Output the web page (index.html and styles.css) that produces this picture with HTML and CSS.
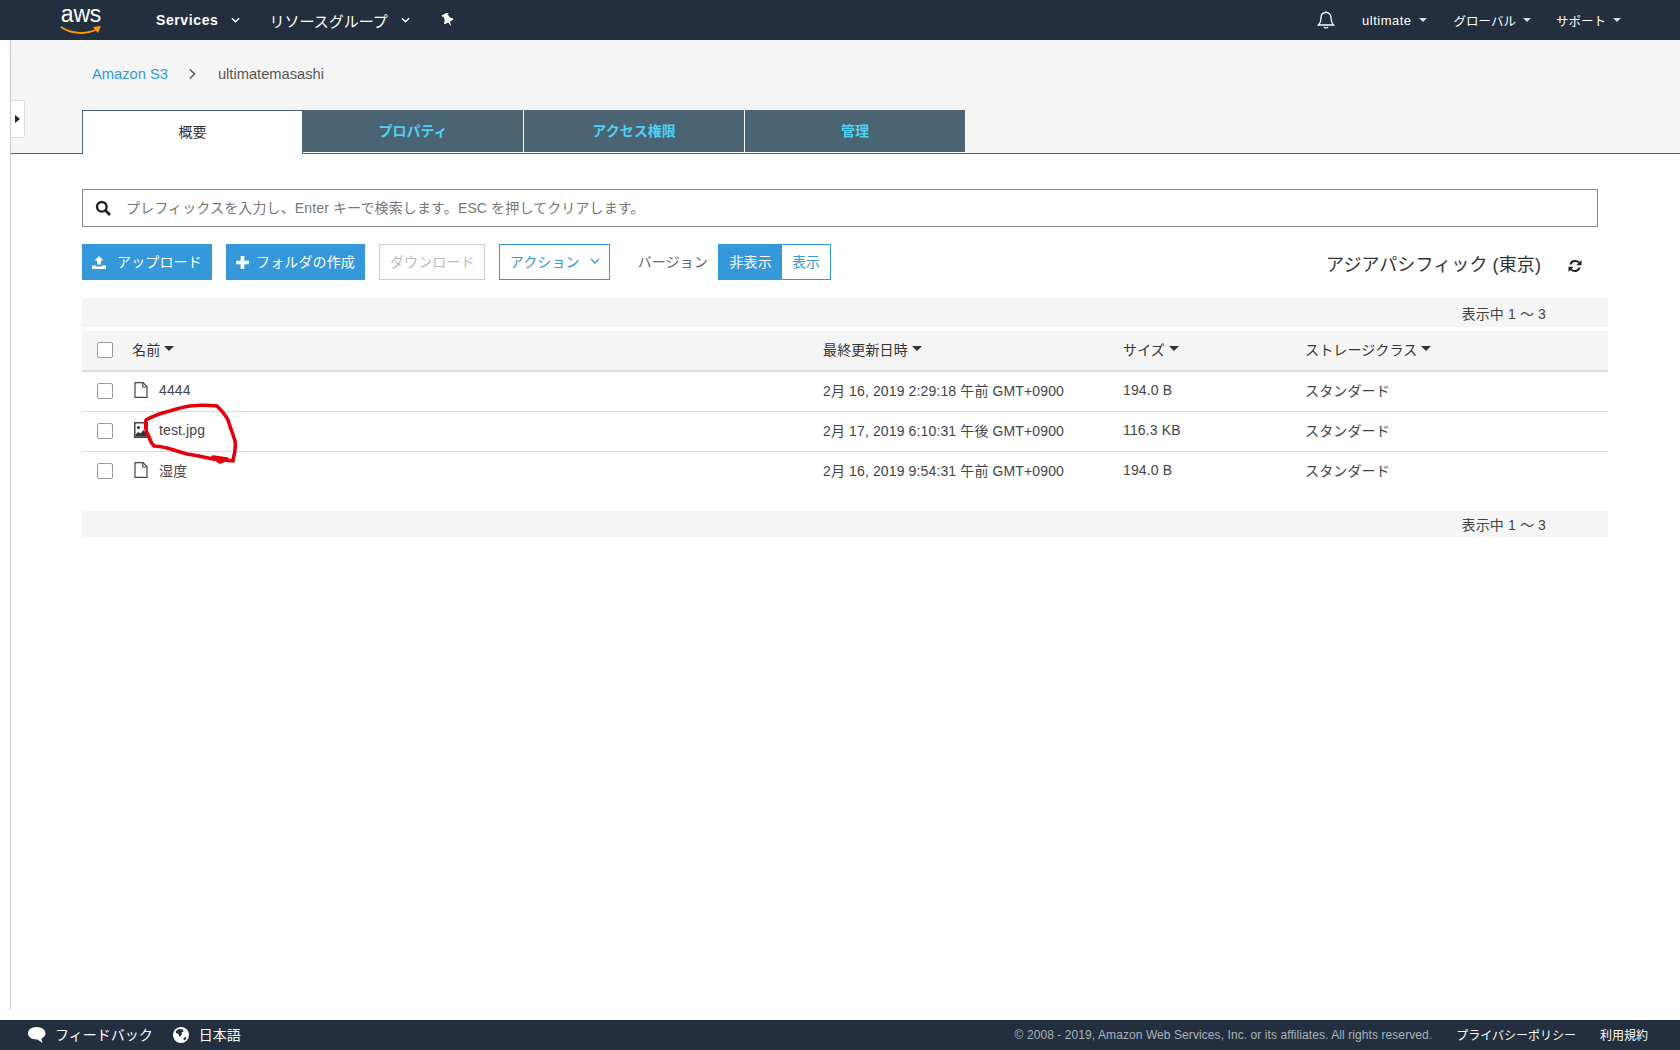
FILE: index.html
```html
<!DOCTYPE html>
<html lang="ja">
<head>
<meta charset="utf-8">
<title>Amazon S3</title>
<link rel="stylesheet" href="styles.css">
</head>
<body>
<div class="page">
  <nav class="nav">
    <div class="logo"><span class="logo-text">aws</span>
      <svg class="logo-smile" viewBox="0 0 42 10"><path d="M1 2C11 9 27 10 37 4" fill="none" stroke="#f90" stroke-width="2"/><path d="M33 2L41 1L38 8Z" fill="#f90"/></svg>
    </div>
    <a class="nav-main services">Services<svg class="chev" viewBox="0 0 10 6"><path d="M1 1l4 4 4-4" fill="none" stroke="#fff" stroke-width="1.6"/></svg></a>
    <a class="nav-main groups">リソースグループ<svg class="chev" viewBox="0 0 10 6"><path d="M1 1l4 4 4-4" fill="none" stroke="#fff" stroke-width="1.6"/></svg></a>
    <svg class="pin" viewBox="0 0 14 14"><g transform="rotate(-28 7 7)"><path d="M3.500 0h7v1.800H9.300l.7 4.200 2 1.800v1.400H8l-1 4.800-1-4.800H2V7.800L4 6l.7-4.200H3.500z" fill="#fff"/></g></svg>
    <div class="nav-right">
      <svg class="bell" viewBox="0 0 18 20"><path d="M9 2.500c-3.500 0-5 2.500-5 5.500 0 3.500-1 5.500-2.500 7h15C15 13.500 14 11.500 14 8c0-3-1.500-5.500-5-5.500zM9 1v1.500M7 17c.5 1.300 3.500 1.300 4 0" fill="none" stroke="#fff" stroke-width="1.300"/></svg>
      <a class="nav-item user">ultimate<i class="caret-w"></i></a>
      <a class="nav-item">グローバル<i class="caret-w"></i></a>
      <a class="nav-item">サポート<i class="caret-w"></i></a>
    </div>
  </nav>

  <main class="main">
    <header class="head">
      <div class="crumbs"><a class="crumb-link">Amazon S3</a>
        <svg class="crumb-sep" viewBox="0 0 8 12"><path d="M2 1.500L6.500 6 2 10.500" fill="none" stroke="#555" stroke-width="1.500"/></svg>
        <span>ultimatemasashi</span></div>
      <div class="tabs">
        <div class="tab active">概要</div>
        <div class="tab">プロパティ</div>
        <div class="tab">アクセス権限</div>
        <div class="tab">管理</div>
      </div>
      <div class="handle"><i class="caret-right"></i></div>
    </header>

    <section class="content">
      <div class="search">
        <svg class="search-icon" viewBox="0 0 16 16"><circle cx="6.800" cy="6.800" r="4.800" fill="none" stroke="#222" stroke-width="2.400"/><path d="M10.300 10.300L15 15" stroke="#222" stroke-width="2.800"/></svg>
        <span>プレフィックスを入力し、Enter キーで検索します。ESC を押してクリアします。</span>
      </div>

      <div class="toolbar">
        <button class="btn primary upload"><svg class="btn-icon" viewBox="0 0 14 14"><path d="M7 1l4.500 4.500H9V9.500H5V5.500H2.500zM0 10.500h4v1h6v-1h4V14H0z" fill="#fff"/></svg>アップロード</button>
        <button class="btn primary folder"><svg class="btn-icon plus" viewBox="0 0 14 14"><path d="M5 0h4v5h5v4H9v5H5V9H0V5h5z" fill="#fff"/></svg>フォルダの作成</button>
        <button class="btn disabled">ダウンロード</button>
        <button class="btn outline">アクション<svg class="chev-blue" viewBox="0 0 10 6"><path d="M1 1l4 4 4-4" fill="none" stroke="#3498db" stroke-width="1.300"/></svg></button>
        <span class="version">バージョン</span>
        <div class="toggle"><span class="toggle-on">非表示</span><span class="toggle-off">表示</span></div>
        <span class="region">アジアパシフィック (東京)</span>
        <svg class="refresh" viewBox="0 0 16 16"><path d="M2.500 6.500A5.800 5.800 0 0 1 12.600 4L14.500 2v5.200H9.300l2-2A4 4 0 0 0 4.600 6.500zM13.500 9.500A5.800 5.800 0 0 1 3.400 12L1.500 14V8.800h5.200l-2 2A4 4 0 0 0 11.400 9.500z" fill="#222"/></svg>
      </div>

      <div class="table-wrap">
        <div class="count-bar"><span>表示中 1 ～ 3</span></div>
        <div class="row header">
          <span class="check"></span><span class="name">名前<i class="caret"></i></span><span class="date">最終更新日時<i class="caret"></i></span><span class="size">サイズ<i class="caret"></i></span><span class="class">ストレージクラス<i class="caret"></i></span>
        </div>
        <div class="row">
          <span class="check"></span>
          <span class="name"><svg class="file-icon" viewBox="0 0 14 16"><path d="M1 .700h8L13 4.700V15.300H1zM8.700 1v4H13" fill="none" stroke="#444" stroke-width="1.200"/></svg>4444</span>
          <span class="date">2月 16, 2019 2:29:18 午前 GMT+0900</span><span class="size">194.0 B</span><span class="class">スタンダード</span>
        </div>
        <div class="row">
          <span class="check"></span>
          <span class="name"><svg class="file-icon" viewBox="0 0 14 16"><path d="M0 0h14v16H0z" fill="#444"/><path d="M1.500 1.500h11v13h-11z" fill="#fff"/><circle cx="4.500" cy="5.500" r="1.600" fill="#333"/><path d="M1.500 14.500v-2l3-2.500 2 1.500 3-3.500 3 3.500v3z" fill="#333"/></svg>test.jpg</span>
          <span class="date">2月 17, 2019 6:10:31 午後 GMT+0900</span><span class="size">116.3 KB</span><span class="class">スタンダード</span>
        </div>
        <div class="row last">
          <span class="check"></span>
          <span class="name"><svg class="file-icon" viewBox="0 0 14 16"><path d="M1 .700h8L13 4.700V15.300H1zM8.700 1v4H13" fill="none" stroke="#444" stroke-width="1.200"/></svg>湿度</span>
          <span class="date">2月 16, 2019 9:54:31 午前 GMT+0900</span><span class="size">194.0 B</span><span class="class">スタンダード</span>
        </div>
        <div class="count-bar bottom"><span>表示中 1 ～ 3</span></div>
      </div>
    </section>
  </main>

  <footer class="footer">
    <svg class="foot-icon" viewBox="0 0 20 18"><path d="M9.500 1C4.500 1 1 3.800 1 7.300c0 3.400 3.500 6.200 8.500 6.200l1 0 5 3.500-1.300-4.300c2.300-1.200 4.300-3 4.300-5.400C18.500 3.800 14.500 1 9.500 1z" fill="#fff"/></svg>
    <span class="foot-text feedback">フィードバック</span>
    <svg class="foot-icon globe" viewBox="0 0 16 16"><circle cx="8" cy="8" r="8" fill="#fff"/><path d="M3 4l3-2 4 .5.500 2-2 1 .5 2-2.500 2.500-1-3-2.500-1zM10 12l2-2 1.500.5-1.500 3z" fill="#232f3e"/></svg>
    <span class="foot-text">日本語</span>
    <div class="foot-right">
      <span class="copy">© 2008 - 2019, Amazon Web Services, Inc. or its affiliates. All rights reserved.</span>
      <span>プライバシーポリシー</span>
      <span>利用規約</span>
    </div>
  </footer>

  <svg class="scribble" viewBox="0 0 110 70"><path d="M74 3C65 2 55 2 47 3 40 4 33 6 27 8 18 10 10 13 3 17 2 23 3 29 6 34 7 38 9 41 11 43 16 43 20 44 24 45 31 47 37 49 44 51 52 52 61 54 70 56 77 57 84 57 90 58M90 57C92 50 93 44 92 38 90 31 87 24 85 17 82 11 78 7 74 3M70 54l14 2-7 3z" fill="none" stroke="#e3000f" stroke-width="3.600" stroke-linejoin="round" stroke-linecap="round"/></svg>
</div>
</body>
</html>
```
FILE: styles.css
```css
* { box-sizing: border-box; }
html, body { margin: 0; padding: 0; height: 100%; }
body { font-family: "Liberation Sans", "Noto Sans CJK JP", sans-serif; font-size: 14px; color: #444; background: #fff; }
.page { position: relative; height: 1050px; display: flex; flex-direction: column; overflow: hidden; }

/* top nav */
.nav { height: 40px; flex: none; background: #232f3e; color: #fff; display: flex; align-items: center; }
.logo { position: relative; width: 42px; height: 36px; margin-left: 60px; flex: none; }
.logo-text { display: block; font-size: 23px; line-height: 24px; text-align: center; color: #fff; letter-spacing: -.2px; }
.logo-smile { position: absolute; left: 0; top: 23px; width: 42px; height: 10px; }
.nav-main { display: flex; align-items: center; font-size: 14px; font-weight: 700; }
.services { margin-left: 54px; letter-spacing: .6px; }
.groups { margin-left: 29px; font-weight: 400; font-size: 15px; }
.chev { width: 9px; height: 6px; margin-left: 13px; }
.pin { width: 14px; height: 14px; margin-left: 31px; }
.nav-right { margin-left: auto; margin-right: 59px; display: flex; align-items: center; font-size: 12.500px; }
.bell { width: 18px; height: 20px; margin-right: 27px; }
.nav-item { display: flex; align-items: center; margin-right: 25px; }
.user { font-size: 13px; letter-spacing: .5px; margin-right: 27px; }
.nav-item:last-child { margin-right: 0; }
.caret-w { width: 0; height: 0; border: 4px solid transparent; border-top-color: #ddd; border-bottom: 0; margin-left: 7px; }

/* main */
.main { flex: 1; margin: 0 0 10px 10px; border-left: 1px solid #ccc; min-height: 0; }
.head { position: relative; height: 114px; background: #f5f5f5; border-bottom: 1px solid #4b6473; display: flex; flex-direction: column; }
.crumbs { flex: none; display: flex; align-items: center; height: 70px; padding: 0 0 3px 81px; color: #555; font-size: 14.700px; }
.crumb-link { color: #2f9bd8; }
.crumb-sep { width: 8px; height: 12px; margin: 0 22px 0 20px; }
.tabs { flex: none; display: flex; padding-left: 71px; height: 44px; }
.tab { width: 221px; height: 43px; background: #4b6473; color: #4fd0f5; border: 1px solid #fff; border-width: 0 1px 1px 0; display: flex; align-items: center; justify-content: center; font-size: 14px; font-weight: 700; padding-bottom: 2px; }
.tab.active { height: 44px; background: #fff; color: #333; border: 1px solid #4b6473; border-bottom: 0; font-weight: 400; padding-bottom: 3px; }
.handle { position: absolute; left: 0; top: 60px; width: 14px; height: 38px; background: #fff; border: 1px solid #ddd; border-left: 0; border-radius: 0 3px 3px 0; display: flex; align-items: center; justify-content: center; }
.caret-right { width: 0; height: 0; border: 4px solid transparent; border-left: 5px solid #222; border-right: 0; }

/* content */
.content { padding: 35px 72px 0 71px; letter-spacing: .13px; }
.search { width: 1516px; height: 38px; border: 1px solid #888; display: flex; align-items: center; padding: 0 0 2px 12px; color: #777; font-size: 14px; }
.search-icon { width: 16px; height: 16px; margin: 2px 15px 0 0; }
.toolbar { display: flex; align-items: center; height: 36px; margin-top: 17px; }
.btn { height: 36px; font: inherit; font-size: 14px; letter-spacing: inherit; padding: 0 10px 2px; margin-right: 14px; display: flex; align-items: center; border: 1px solid transparent; background: #fff; white-space: nowrap; flex: none; }
.primary { background: #3498db; color: #fff; }
.upload { width: 130px; padding-left: 9px; padding-right: 0; }
.btn-icon { width: 14px; height: 14px; margin: 2px 11px 0 0; flex: none; }
.plus { width: 13px; height: 13px; margin: 2px 7px 0 -1px; }
.folder { padding-right: 9px; }
.disabled { color: #bbb; border-color: #ccc; padding-right: 9px; }
.outline { color: #3498db; border-color: #3498db; width: 111px; padding-right: 0; }
.chev-blue { width: 10px; height: 6px; margin-left: 10px; flex: none; }
.version { margin: 0 10px 2px 14px; color: #666; }
.toggle { display: flex; height: 36px; border: 1px solid #3498db; }
.toggle-on { width: 63px; background: #3498db; color: #fff; display: flex; align-items: center; justify-content: center; padding-bottom: 2px; }
.toggle-off { width: 48px; color: #3498db; display: flex; align-items: center; justify-content: center; padding-bottom: 2px; }
.region { margin-left: auto; font-size: 18px; letter-spacing: .1px; color: #333; margin-right: 26px; padding-top: 2px; }
.refresh { width: 16px; height: 16px; margin-right: 25px; margin-top: 7px; }

/* table */
.table-wrap { margin-top: 19px; }
.count-bar { height: 28px; background: #f5f5f5; border-top: 1px solid #eee; display: flex; align-items: center; justify-content: flex-end; padding: 0 62px 2px 0; color: #444; font-size: 14px; }
.count-bar.bottom { margin-top: 19px; height: 26px; border-top: 0; padding-bottom: 0; }
.row { height: 40px; display: flex; align-items: center; border-bottom: 1px solid #ddd; padding: 0 0 2px 15px; color: #444; }
.row.last { border-bottom: 0; }
.row.header { height: 41px; margin-top: 4px; background: #f5f5f5; border-bottom: 2px solid #ddd; color: #333; }
.check { width: 16px; height: 16px; border: 1px solid #999; border-radius: 2px; background: #fff; flex: none; }
.name, .date, .size, .class { display: flex; align-items: center; flex: none; margin-bottom: 2px; }
.name { width: 691px; margin-left: 19px; }
.date { width: 300px; }
.size { width: 182px; }
.file-icon { width: 14px; height: 16px; margin: 0 11px 0 2px; flex: none; }
.caret { display: inline-block; width: 0; height: 0; border: 5px solid transparent; border-top-color: #333; border-bottom: 0; margin-left: 4px; }

/* footer */
.footer { height: 30px; flex: none; background: #232f3e; color: #fff; display: flex; align-items: center; padding-left: 27px; font-size: 14px; }
.foot-icon { width: 20px; height: 18px; margin-right: 8px; flex: none; }
.globe { width: 16px; height: 16px; margin-right: 10px; }
.foot-text { padding-bottom: 2px; }
.feedback { margin-right: 20px; }
.foot-right { margin-left: auto; margin-right: 32px; display: flex; align-items: center; font-size: 12px; gap: 24px; padding-bottom: 1px; }
.copy { color: #aab2bc; letter-spacing: .08px; }

/* hand-drawn annotation over the list */
.scribble { position: absolute; left: 143px; top: 403px; width: 110px; height: 70px; }
```
